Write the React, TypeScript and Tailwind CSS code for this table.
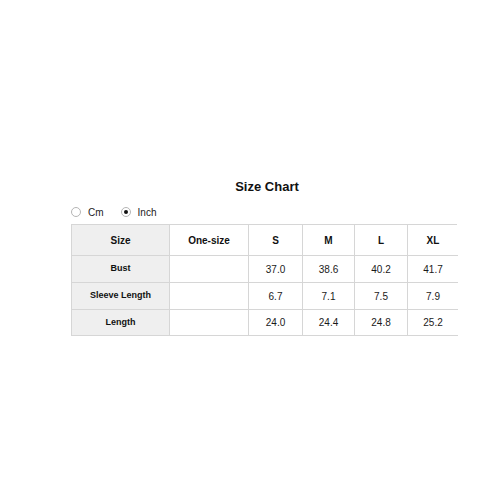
import { Fragment } from "react";

const sizes = ["One-size", "S", "M", "L", "XL"];

const rows = [
  { label: "Bust", values: ["", "37.0", "38.6", "40.2", "41.7"], h: "h-[27px]" },
  { label: "Sleeve Length", values: ["", "6.7", "7.1", "7.5", "7.9"], h: "h-[27px]" },
  { label: "Length", values: ["", "24.0", "24.4", "24.8", "25.2"], h: "h-[26px]" },
];

const Radio = ({ checked, label }: { checked?: boolean; label: string }) => (
  <div className="flex items-center">
    <span className="flex h-[10px] w-[10px] items-center justify-center rounded-full border border-[#b5b5b5] bg-white">
      {checked && <span className="h-[4px] w-[4px] rounded-full bg-[#111]" />}
    </span>
    <span className="ml-[7px] text-[10px] text-[#222]">{label}</span>
  </div>
);

export default function App() {
  return (
    <div
      className="h-[500px] w-[500px] bg-white pl-[71px] pt-[178px]"
      style={{ fontFamily: '"Liberation Sans", Arial, sans-serif' }}
    >
      <div className="w-[386px]">
        <div className="h-[17px] pl-[6px] text-center text-[13px] font-bold leading-[17px] text-[#111]">
          Size Chart
        </div>
        <div className="mt-[11px] flex h-[12px] items-center gap-[17px]">
          <Radio label="Cm" />
          <Radio checked label="Inch" />
        </div>
        <div className="mt-[6px] grid grid-cols-[98px_79px_54px_52px_53px_50px] border-l border-t border-[#d6d6d6]">
          <div className="flex h-[31px] items-center justify-center border-b border-r border-[#d6d6d6] bg-[#efefef] text-[10px] font-bold text-[#111]">
            Size
          </div>
          {sizes.map((s, i) => (
            <div
              key={s}
              className={`flex h-[31px] items-center justify-center border-b border-[#d6d6d6] text-[10px] font-bold text-[#111] ${i < sizes.length - 1 ? "border-r" : ""}`}
            >
              {s}
            </div>
          ))}
          {rows.map((row) => (
            <Fragment key={row.label}>
              <div
                className={`flex ${row.h} items-center justify-center border-b border-r border-[#d6d6d6] bg-[#efefef] text-[9px] font-bold text-[#111]`}
              >
                {row.label}
              </div>
              {row.values.map((v, i) => (
                <div
                  key={row.label + i}
                  className={`flex ${row.h} items-center justify-center border-b border-[#d6d6d6] text-[10px] text-[#1a1a1a] ${i < row.values.length - 1 ? "border-r" : ""}`}
                >
                  {v}
                </div>
              ))}
            </Fragment>
          ))}
        </div>
      </div>
    </div>
  );
}
